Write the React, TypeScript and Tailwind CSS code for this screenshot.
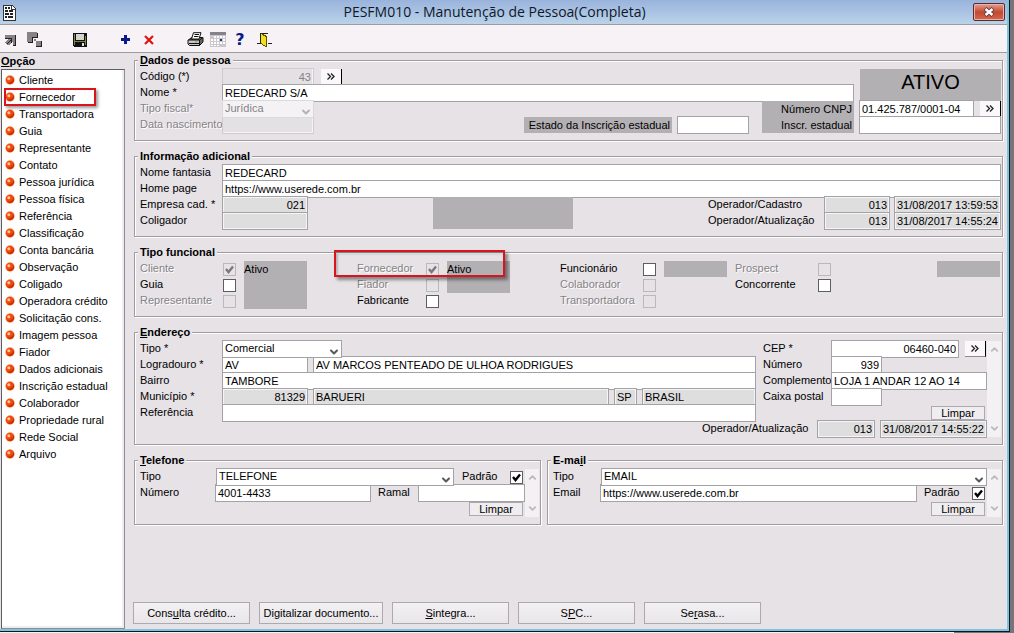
import type { ReactNode } from "react";
import { clsx } from "clsx";
import { ChevronDown, ChevronUp } from "lucide-react";

const menu = [
  "Cliente",
  "Fornecedor",
  "Transportadora",
  "Guia",
  "Representante",
  "Contato",
  "Pessoa jurídica",
  "Pessoa física",
  "Referência",
  "Classificação",
  "Conta bancária",
  "Observação",
  "Coligado",
  "Operadora crédito",
  "Solicitação cons.",
  "Imagem pessoa",
  "Fiador",
  "Dados adicionais",
  "Inscrição estadual",
  "Colaborador",
  "Propriedade rural",
  "Rede Social",
  "Arquivo",
];

type GroupProps = {
  legend: ReactNode;
  children: ReactNode;
};

const Group = ({ legend, children }: GroupProps) => (
  <fieldset className="min-w-0 border border-[#9f9c9f] shadow-[1px_1px_0_#fff,inset_1px_1px_0_#fff]">
    <legend className="ml-[3px] bg-[#e6e2e6] px-0.5 font-bold leading-4">
      {legend}
    </legend>
    <div className="pb-[7px] pl-[5px] pr-px pt-px">{children}</div>
  </fieldset>
);

const Row = ({
  className,
  children,
}: {
  className?: string;
  children?: ReactNode;
}) => (
  <div className={clsx("flex h-4 min-w-0 items-center", className)}>
    {children}
  </div>
);

type LabelProps = {
  htmlFor: string;
  className?: string;
  disabled?: boolean;
  plate?: boolean;
  children: ReactNode;
};

const Label = ({
  htmlFor,
  className,
  disabled,
  plate,
  children,
}: LabelProps) => (
  <label
    htmlFor={htmlFor}
    className={clsx(
      "shrink-0 whitespace-nowrap",
      plate ? "bg-[#b3b0b3] pr-0.5 text-right leading-4" : "pb-0.5",
      disabled && "text-[#858285] [text-shadow:1px_1px_0_#fff]",
      className,
    )}
  >
    {children}
  </label>
);

type FieldProps = {
  id: string;
  value?: string;
  className?: string;
  readOnly?: boolean;
  disabled?: boolean;
  label?: string;
};

const Field = ({
  id,
  value = "",
  className,
  readOnly,
  disabled,
  label,
}: FieldProps) => (
  <input
    id={id}
    type="text"
    aria-label={label}
    defaultValue={value}
    readOnly={readOnly}
    disabled={disabled}
    className={clsx(
      "h-[18px] min-w-0 border px-0.5 outline-none",
      disabled &&
        "border-[#cfcccf] bg-[#e4e1e4] text-[#858285] shadow-[inset_-1px_-1px_0_#f6f4f6]",
      !disabled && "border-[#a5a2a5]",
      !disabled && readOnly && "bg-[#dedede] shadow-[inset_0_0_0_1px_#f6f4f6]",
      !disabled && !readOnly && "bg-white",
      className,
    )}
  />
);

type SelectProps = {
  id: string;
  value: string;
  className?: string;
  disabled?: boolean;
};

const Select = ({ id, value, className, disabled }: SelectProps) => (
  <div className={clsx("relative h-[18px]", className)}>
    <select
      id={id}
      disabled={disabled}
      className={clsx(
        "block h-full w-full appearance-none border px-0.5 pb-0.5 outline-none",
        disabled
          ? "border-[#dcd9dc] bg-[#f4f2f4] text-[#858285] opacity-100"
          : "border-[#a5a2a5] bg-white",
      )}
    >
      <option>{value}</option>
    </select>
    <ChevronDown
      size={12}
      strokeWidth={4}
      className={clsx(
        "pointer-events-none absolute bottom-0 right-0.5",
        disabled ? "text-[#b5b2b5]" : "text-[#5a585a]",
      )}
    />
  </div>
);

type CheckProps = {
  id: string;
  checked?: boolean;
  disabled?: boolean;
};

const Check = ({ id, checked, disabled }: CheckProps) => (
  <span className="relative flex size-[13px] shrink-0">
    <input
      id={id}
      type="checkbox"
      defaultChecked={checked}
      disabled={disabled}
      className={clsx(
        "peer size-[13px] appearance-none border",
        disabled ? "border-[#bbb8bb]" : "border-[#5f5d5f] bg-white",
      )}
    />
    <svg
      viewBox="0 0 13 13"
      fill="none"
      stroke="currentColor"
      strokeWidth="2.4"
      className={clsx(
        "pointer-events-none absolute inset-0 hidden peer-checked:block",
        disabled ? "text-[#7b797b]" : "text-black",
      )}
    >
      <path d="M3 6l2.5 3L10 3.5" />
    </svg>
  </span>
);

const Lookup = ({ label, className }: { label: string; className?: string }) => (
  <button
    type="button"
    aria-label={label}
    className={clsx(
      "flex h-4 w-[21px] shrink-0 items-center justify-center border-b border-r border-b-[#8f8c8f] border-r-black bg-[#faf8fa]",
      className,
    )}
  >
    <svg
      width="8"
      height="7"
      viewBox="0 0 8 7"
      fill="none"
      stroke="#222"
      strokeWidth="1.3"
    >
      <path d="M.5 .5l3 3-3 3M4 .5l3 3-3 3" />
    </svg>
  </button>
);

const Clear = () => (
  <button
    type="button"
    className="h-[14px] w-[54px] shrink-0 border border-[#adaaad] bg-[#efedef] leading-3"
  >
    Limpar
  </button>
);

const Scroller = () => (
  <div className="flex w-[14px] shrink-0 flex-col items-center justify-between bg-[#f4f1f4] py-[3px] text-[#bdbabd]">
    <ChevronUp size={11} strokeWidth={4} />
    <ChevronDown size={11} strokeWidth={4} />
  </div>
);

type FlagProps = {
  id: string;
  label: string;
  checked?: boolean;
  disabled?: boolean;
  narrow?: boolean;
};

const Flag = ({ id, label, checked, disabled, narrow }: FlagProps) => (
  <Row>
    <Label
      htmlFor={id}
      disabled={disabled}
      className={narrow ? "w-[69px]" : "w-[83px]"}
    >
      {label}
    </Label>
    <Check id={id} checked={checked} disabled={disabled} />
  </Row>
);

const Status = ({
  className,
  children,
}: {
  className?: string;
  children?: ReactNode;
}) => (
  <div className={clsx("w-[63px] self-start bg-[#b3b0b3] leading-4", className)}>
    {children}
  </div>
);

const Bullet = () => (
  <svg width="10" height="10" viewBox="0 0 10 10" className="shrink-0">
    <circle cx="5" cy="5" r="4.7" fill="#f7a070" />
    <circle cx="5" cy="5" r="4.2" fill="#f04a10" />
    <path
      d="M2 7.5a4 4 0 0 0 6.5-.5A4 4 0 0 0 8.500 3c0 3-3 5-6.500 4.500z"
      fill="#c43000"
    />
    <circle cx="3.8" cy="3.8" r="1.5" fill="#ffc9a0" />
  </svg>
);

const Tool = ({
  label,
  className,
  children,
}: {
  label: string;
  className?: string;
  children: ReactNode;
}) => (
  <button
    type="button"
    aria-label={label}
    className={clsx("flex shrink-0 items-center justify-center", className)}
  >
    {children}
  </button>
);

const TitleBar = () => (
  <header className="flex h-6 items-center bg-linear-to-b from-[#9ab3dc] to-[#bad3ea]">
    <svg
      width="14"
      height="17"
      viewBox="0 0 14 17"
      shapeRendering="crispEdges"
      className="ml-0.5 shrink-0"
    >
      <path d="M1 1h9l3 3v12H1z" fill="#fff" stroke="#333" />
      <path d="M9 1v4h4" fill="none" stroke="#333" />
      <path
        d="M3 4h2M6 4h2M3 7h3M7 7h4M3 10h4M8 10h3M3 13h2M6 13h5"
        stroke="#222"
        strokeWidth="2"
      />
    </svg>
    <h1 className="flex-1 text-center font-['Open_Sans',sans-serif] text-[14px] leading-6 text-[#101828]">
      PESFM010 - Manutenção de Pessoa(Completa)
    </h1>
    <button
      type="button"
      aria-label="Fechar"
      className="mr-0.5 flex h-[18px] w-8 items-center justify-center rounded-xs border border-[#5b2a2c] bg-linear-to-b from-[#e2a093] via-[#c4482f] to-[#d4674f] shadow-[inset_0_0_0_1px_#e9b3a8]"
    >
      <svg width="12" height="10" viewBox="0 0 12 10">
        <path d="M2 1.5l8 7M10 1.500l-8 7" stroke="#5b3a3c" strokeWidth="4" />
        <path d="M2.500 2l7 6M9.500 2l-7 6" stroke="#fff" strokeWidth="2.4" />
      </svg>
    </button>
  </header>
);

const ToolBar = () => (
  <div className="relative z-10 flex h-[29px] items-center border-y border-[#9f9c9f] bg-[#f6f2f6] pl-[5px] pt-0.5">
    <Tool label="Retornar" className="w-3">
      <svg width="12" height="12" viewBox="0 0 12 12" shapeRendering="crispEdges">
        <path d="M0 1h10v10H8V8l-4 3H2L0 9V8l3-3H0z" fill="#858385" />
        <path d="M10 1h1v11H8v-1h2z" fill="#222" />
        <path d="M0 4h7v5H6V5H0z" fill="#222" />
        <path d="M5 6h1v1H5zM4 7h1v1H4zM3 8h1v1H3zM2 9h1v1H2z" fill="#222" />
      </svg>
    </Tool>
    <Tool label="Janelas" className="ml-2.5 w-4">
      <svg width="16" height="15" viewBox="0 0 16 15" shapeRendering="crispEdges">
        <path d="M0 0h10v5H5v5H0z" fill="#858385" />
        <path d="M10 1h1v5H6v5H1v-1h4V5h5z" fill="#222" />
        <path d="M7 7h2v2H7zM9 9h5v5H9z" fill="#858385" />
        <path d="M14 9h1v6H9v-1h5z" fill="#222" />
      </svg>
    </Tool>
    <Tool label="Salvar" className="ml-[30px] w-[15px]">
      <svg width="15" height="15" viewBox="0 0 15 15" shapeRendering="crispEdges">
        <path d="M0 1h14v14H1l-1-1z" fill="#111" />
        <path d="M1 2h1v11H1zM12 4h1v9h-1z" fill="#7b8a3a" />
        <path d="M3 2h8v6H3z" fill="#d4d2d4" />
        <path d="M2 9h10v1H2z" fill="#7b8a3a" />
        <path d="M9 11h2v3H9z" fill="#e4e2e4" />
      </svg>
    </Tool>
    <Tool label="Incluir" className="ml-8 w-[11px]">
      <svg width="9" height="9" viewBox="0 0 9 9" shapeRendering="crispEdges">
        <path d="M3 0h3v3h3v3H6v3H3V6H0V3h3z" fill="#0a1a8c" />
      </svg>
    </Tool>
    <Tool label="Excluir" className="ml-3 w-[11px]">
      <svg width="10" height="10" viewBox="0 0 10 10">
        <path d="M1 1l8 8M9 1L1 9" stroke="#e01010" strokeWidth="2.2" />
      </svg>
    </Tool>
    <Tool label="Imprimir" className="ml-[33px] w-[17px]">
      <svg width="17" height="15" viewBox="0 0 17 15">
        <path d="M1.5 8l3-2.500h11l-3 2.500z" fill="#aaa" stroke="#111" />
        <path d="M4.500 7l2-6.300h7.500L12 7z" fill="#fff" stroke="#111" />
        <path d="M7.500 2.500h4.500M7 4.500h4.500" stroke="#111" />
        <path d="M1 8h11.500v5.500H2.500L1 12z" fill="#c8c6c8" stroke="#111" />
        <path d="M12.500 8l3.500-2.500v4.500l-3.500 3.500z" fill="#666" stroke="#111" />
        <path d="M2 11.500h10" stroke="#111" />
        <path d="M8 10h2.500" stroke="#a8a83a" />
      </svg>
    </Tool>
    <Tool label="Calendário" className="ml-1.5 w-4">
      <svg width="16" height="15" viewBox="0 0 16 15" shapeRendering="crispEdges">
        <path d="M0 0h16v15H0z" fill="#c9c7cb" />
        <path d="M0 0h16v3H0z" fill="#85838a" />
        <path
          d="M4 4h2v2H4zM7 4h2v2H7zM10 4h2v2h-2zM13 4h2v2h-2zM1 7h2v2H1zM4 7h2v2H4zM7 7h2v2H7zM13 7h2v2h-2zM1 10h2v2H1zM4 10h2v2H4zM7 10h2v2H7zM10 10h2v2h-2zM13 10h2v2h-2zM1 13h2v1H1zM4 13h2v1H4zM7 13h2v1H7z"
          fill="#fff"
        />
        <path d="M10 7h2v2h-2z" fill="#173a7c" />
      </svg>
    </Tool>
    <Tool
      label="Ajuda"
      className="ml-2 w-3 font-['DejaVu_Sans',sans-serif] text-[16px] font-bold leading-4 text-[#0a1a8c]"
    >
      ?
    </Tool>
    <Tool label="Sair" className="ml-[11px] w-[15px]">
      <svg width="15" height="15" viewBox="0 0 15 15" shapeRendering="crispEdges">
        <path d="M3 11V1h8v10h4v1h-4V2H4v10H0v-1z" fill="#222" />
        <path d="M4 2h3l3 2v11H9l-5-4z" fill="#f4e018" />
        <path d="M4 1l6 3v11H9V5L4 2z" fill="#5a5200" />
        <path d="M4 11l5 3v1l-5-3z" fill="#5a5200" />
      </svg>
    </Tool>
  </div>
);

const SideMenu = () => (
  <nav className="flex w-[125px] shrink-0 flex-col">
    <h2 className="pl-px font-bold leading-4">
      <u>O</u>pção
    </h2>
    <ul className="ml-px flex-1 border border-l-[#5f5d5f] border-r-[#8f8c8f] border-t-[#5f5d5f] border-b-[#8f8c8f] bg-white pt-px shadow-[inset_-2px_-2px_0_#f0edf0]">
      {menu.map((item) => (
        <li key={item} className="relative h-[17px]">
          <button
            type="button"
            className="flex h-full w-full items-center gap-1 whitespace-nowrap pl-[3px] text-left"
          >
            <Bullet />
            {item}
          </button>
          {item === "Fornecedor" && (
            <span className="pointer-events-none absolute -bottom-px left-0.5 top-0 w-[92px] border-2 border-[#d8141c] shadow-[2px_2px_3px_#0006]" />
          )}
        </li>
      ))}
    </ul>
  </nav>
);

const PersonData = () => (
  <Group
    legend={
      <>
        <u>D</u>ados de pessoa
      </>
    }
  >
    <div className="flex gap-1.5">
      <div className="flex-1">
        <Row>
          <Label htmlFor="codigo" className="w-[82px]">
            Código (*)
          </Label>
          <Field id="codigo" value="43" disabled className="w-[92px] text-right" />
          <Lookup label="Buscar código" className="ml-[7px]" />
        </Row>
        <Row>
          <Label htmlFor="nome" className="w-[82px]">
            Nome *
          </Label>
          <Field id="nome" value="REDECARD S/A" className="flex-1" />
        </Row>
      </div>
      <output className="flex w-[141px] items-center justify-center bg-[#b3b0b3] pb-1.5 text-[20px]">
        ATIVO
      </output>
    </div>
    <div className="flex">
      <div>
        <Row>
          <Label htmlFor="fiscal" disabled className="w-[82px]">
            Tipo fiscal*
          </Label>
          <Select id="fiscal" value="Jurídica" disabled className="w-[92px]" />
        </Row>
        <Row>
          <Label htmlFor="nascimento" disabled className="w-[82px]">
            Data nascimento
          </Label>
          <Field id="nascimento" disabled className="w-[92px]" />
        </Row>
      </div>
      <Row className="ml-auto self-end">
        <Label htmlFor="estado-inscricao" plate className="w-[148px]">
          Estado da Inscrição estadual
        </Label>
        <Field id="estado-inscricao" className="ml-[5px] w-[72px]" />
      </Row>
      <div className="ml-[13px] flex w-[92px] flex-col">
        <Label htmlFor="cnpj" plate>
          Número CNPJ
        </Label>
        <Label htmlFor="inscricao" plate>
          Inscr. estadual
        </Label>
      </div>
      <div className="ml-[5px] w-[142px]">
        <Row className="justify-between">
          <Field id="cnpj" value="01.425.787/0001-04" className="w-[115px]" />
          <Lookup label="Buscar CNPJ" />
        </Row>
        <Row>
          <Field id="inscricao" className="flex-1" />
        </Row>
      </div>
    </div>
  </Group>
);

const ExtraInfo = () => (
  <Group legend="Informação adicional">
    <Row>
      <Label htmlFor="fantasia" className="w-[82px]">
        Nome fantasia
      </Label>
      <Field id="fantasia" value="REDECARD" className="flex-1" />
    </Row>
    <Row>
      <Label htmlFor="home-page" className="w-[82px]">
        Home page
      </Label>
      <Field
        id="home-page"
        value="https://www.userede.com.br"
        className="flex-1"
      />
    </Row>
    <div className="flex">
      <div>
        <Row>
          <Label htmlFor="empresa" className="w-[82px]">
            Empresa cad. *
          </Label>
          <Field id="empresa" value="021" readOnly className="w-[86px] text-right" />
        </Row>
        <Row>
          <Label htmlFor="coligador" className="w-[82px]">
            Coligador
          </Label>
          <Field id="coligador" readOnly className="w-[86px]" />
        </Row>
      </div>
      <div className="ml-[125px] w-[140px] bg-[#b3b0b3]" />
      <div className="ml-auto">
        <Row>
          <Label htmlFor="op-cadastro" className="w-[116px]">
            Operador/Cadastro
          </Label>
          <Field id="op-cadastro" value="013" readOnly className="w-[66px] text-right" />
          <Field
            id="data-cadastro"
            label="Data do cadastro"
            value="31/08/2017 13:59:53"
            readOnly
            className="ml-1 w-[107px]"
          />
        </Row>
        <Row>
          <Label htmlFor="op-atualizacao" className="w-[116px]">
            Operador/Atualização
          </Label>
          <Field id="op-atualizacao" value="013" readOnly className="w-[66px] text-right" />
          <Field
            id="data-atualizacao"
            label="Data da atualização"
            value="31/08/2017 14:55:24"
            readOnly
            className="ml-1 w-[107px]"
          />
        </Row>
      </div>
    </div>
  </Group>
);

const RoleFlags = () => (
  <Group legend="Tipo funcional">
    <div className="flex pr-px">
      <div>
        <Flag id="f-cliente" label="Cliente" checked disabled />
        <Flag id="f-guia" label="Guia" />
        <Flag id="f-representante" label="Representante" disabled />
      </div>
      <Status className="ml-2 h-12">Ativo</Status>
      <div className="relative ml-[50px] flex">
        <div>
          <Flag id="f-fornecedor" label="Fornecedor" checked disabled narrow />
          <Flag id="f-fiador" label="Fiador" disabled narrow />
          <Flag id="f-fabricante" label="Fabricante" narrow />
        </div>
        <Status className="ml-2 h-8">Ativo</Status>
        <span className="pointer-events-none absolute -left-[23px] -top-[11px] h-[27px] w-[171px] border-2 border-[#d8141c] shadow-[3px_3px_3px_#0006,inset_2px_2px_2px_#0003]" />
      </div>
      <div className="ml-[50px]">
        <Flag id="f-funcionario" label="Funcionário" />
        <Flag id="f-colaborador" label="Colaborador" disabled />
        <Flag id="f-transportadora" label="Transportadora" disabled />
      </div>
      <Status className="ml-2 h-4" />
      <div className="ml-2">
        <Flag id="f-prospect" label="Prospect" disabled />
        <Flag id="f-concorrente" label="Concorrente" />
      </div>
      <Status className="ml-auto h-4" />
    </div>
  </Group>
);

const Address = () => (
  <Group
    legend={
      <>
        <u>E</u>ndereço
      </>
    }
  >
    <div className="flex">
      <div className="flex-1">
        <div className="flex gap-[7px]">
          <div className="flex-1">
            <Row>
              <Label htmlFor="end-tipo" className="w-[82px]">
                Tipo *
              </Label>
              <Select id="end-tipo" value="Comercial" className="w-[120px]" />
            </Row>
            <Row>
              <Label htmlFor="tipo-logradouro" className="w-[82px]">
                Logradouro *
              </Label>
              <Field id="tipo-logradouro" value="AV" className="w-[86px]" />
              <Field
                id="logradouro"
                label="Nome do logradouro"
                value="AV MARCOS PENTEADO DE ULHOA RODRIGUES"
                className="ml-[5px] flex-1"
              />
            </Row>
            <Row>
              <Label htmlFor="bairro" className="w-[82px]">
                Bairro
              </Label>
              <Field id="bairro" value="TAMBORE" className="flex-1" />
            </Row>
            <Row>
              <Label htmlFor="municipio" className="w-[82px]">
                Município *
              </Label>
              <Field
                id="municipio"
                value="81329"
                readOnly
                className="w-[86px] text-right"
              />
              <Field
                id="cidade"
                label="Cidade"
                value="BARUERI"
                readOnly
                className="ml-[5px] flex-1"
              />
              <Field
                id="uf"
                label="UF"
                value="SP"
                readOnly
                className="ml-[5px] w-[23px]"
              />
              <Field
                id="pais"
                label="País"
                value="BRASIL"
                readOnly
                className="ml-[5px] w-[114px]"
              />
            </Row>
            <Row>
              <Label htmlFor="referencia" className="w-[82px]">
                Referência
              </Label>
              <Field id="referencia" className="flex-1" />
            </Row>
          </div>
          <div className="w-[224px]">
            <Row>
              <Label htmlFor="cep" className="w-[68px]">
                CEP *
              </Label>
              <Field id="cep" value="06460-040" className="w-32 text-right" />
              <Lookup label="Buscar CEP" className="ml-1.5" />
            </Row>
            <Row>
              <Label htmlFor="end-numero" className="w-[68px]">
                Número
              </Label>
              <Field id="end-numero" value="939" className="w-[51px] text-right" />
            </Row>
            <Row>
              <Label htmlFor="complemento" className="w-[68px]">
                Complemento
              </Label>
              <Field
                id="complemento"
                value="LOJA 1 ANDAR 12 AO 14"
                className="flex-1"
              />
            </Row>
            <Row>
              <Label htmlFor="caixa-postal" className="w-[68px]">
                Caixa postal
              </Label>
              <Field id="caixa-postal" className="w-[51px]" />
            </Row>
            <Row className="justify-end pr-0.5">
              <Clear />
            </Row>
          </div>
        </div>
        <Row className="justify-end">
          <Label htmlFor="end-operador" className="w-[115px]">
            Operador/Atualização
          </Label>
          <Field id="end-operador" value="013" readOnly className="w-[58px] text-right" />
          <Field
            id="end-data"
            label="Data da atualização do endereço"
            value="31/08/2017 14:55:22"
            readOnly
            className="ml-[5px] w-[107px]"
          />
        </Row>
      </div>
      <Scroller />
    </div>
  </Group>
);

const Phone = () => (
  <Group
    legend={
      <>
        <u>T</u>elefone
      </>
    }
  >
    <div className="flex">
      <div className="flex-1">
        <Row className="pr-0.5">
          <Label htmlFor="tel-tipo" className="w-[76px]">
            Tipo
          </Label>
          <Select id="tel-tipo" value="TELEFONE" className="flex-1" />
          <Label htmlFor="tel-padrao" className="ml-2 w-12">
            Padrão
          </Label>
          <Check id="tel-padrao" checked />
        </Row>
        <Row>
          <Label htmlFor="tel-numero" className="w-[75px]">
            Número
          </Label>
          <Field id="tel-numero" value="4001-4433" className="flex-1" />
          <Label htmlFor="ramal" className="ml-[7px] w-10">
            Ramal
          </Label>
          <Field id="ramal" className="w-[107px]" />
        </Row>
        <Row className="justify-end pr-0.5">
          <Clear />
        </Row>
      </div>
      <Scroller />
    </div>
  </Group>
);

const Email = () => (
  <Group
    legend={
      <>
        E-ma<u>i</u>l
      </>
    }
  >
    <div className="flex">
      <div className="flex-1">
        <Row>
          <Label htmlFor="email-tipo" className="w-12">
            Tipo
          </Label>
          <Select id="email-tipo" value="EMAIL" className="flex-1" />
        </Row>
        <Row className="pr-0.5">
          <Label htmlFor="email" className="w-[47px]">
            Email
          </Label>
          <Field
            id="email"
            value="https://www.userede.com.br"
            className="flex-1"
          />
          <Label htmlFor="email-padrao" className="ml-[7px] w-12">
            Padrão
          </Label>
          <Check id="email-padrao" checked />
        </Row>
        <Row className="justify-end pr-0.5">
          <Clear />
        </Row>
      </div>
      <Scroller />
    </div>
  </Group>
);

const Action = ({
  wide,
  children,
}: {
  wide?: boolean;
  children: ReactNode;
}) => (
  <button
    type="button"
    className={clsx(
      "h-[22px] whitespace-nowrap border border-[#adaaad] bg-linear-to-b from-[#f2f0f2] to-[#e9e6e9]",
      wide ? "w-[124px]" : "w-[117px]",
    )}
  >
    {children}
  </button>
);

const App = () => {
  return (
    <div className="flex min-h-screen flex-col bg-[#77757b] font-['Liberation_Sans',Arial,sans-serif] text-[11px] leading-[14px] text-black">
      <div className="mr-1 flex flex-1 flex-col border-b border-r border-[#0b1a20]">
        <div className="flex flex-1 flex-col border-b-2 border-r-2 border-[#7fc4dc] bg-[#e6e2e6]">
          <TitleBar />
          <ToolBar />
          <div className="flex flex-1">
            <SideMenu />
            <main className="flex min-w-0 flex-1 flex-col pb-[5px] pl-[9px] pr-1">
              <div className="-mt-px flex flex-col gap-[7px]">
                <PersonData />
                <ExtraInfo />
                <RoleFlags />
                <Address />
                <div className="grid grid-cols-[407fr_456fr] gap-1.5">
                  <Phone />
                  <Email />
                </div>
              </div>
              <footer className="-ml-px mt-auto flex gap-[9px]">
                <Action>
                  Cons<u>u</u>lta crédito...
                </Action>
                <Action wide>
                  Di<u>g</u>italizar documento...
                </Action>
                <Action>
                  <u>S</u>integra...
                </Action>
                <Action>
                  S<u>P</u>C...
                </Action>
                <Action>
                  Se<u>r</u>asa...
                </Action>
              </footer>
            </main>
          </div>
        </div>
      </div>
      <div className="mr-[60px] h-px bg-[#eef6f8]" />
    </div>
  );
};

export default App;
